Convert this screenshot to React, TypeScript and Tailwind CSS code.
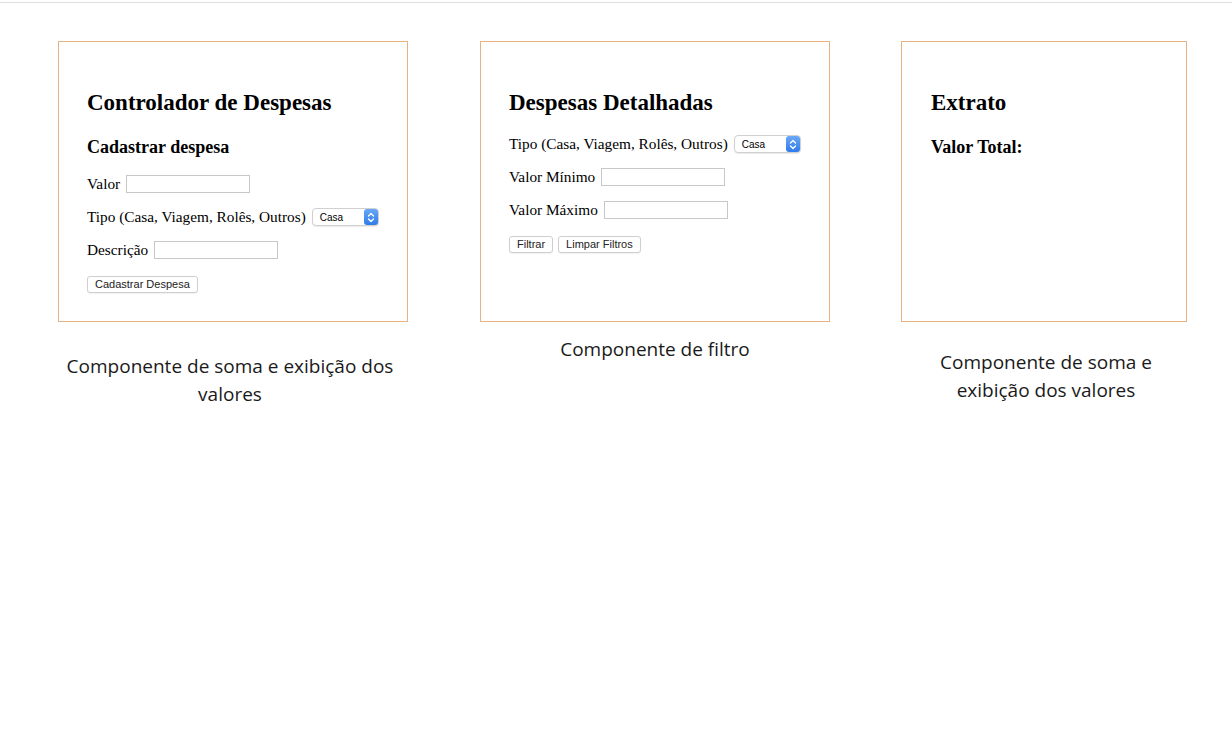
import React from 'react';

const serif = { fontFamily: '"Liberation Serif", "Times New Roman", serif' };

function TextInput({ w = 'w-[124px]' }: { w?: string }) {
  return <span className={`inline-block ${w} h-[18px] border border-[#c8c8c8] bg-white align-middle`} />;
}

function FakeSelect() {
  return (
    <span className="inline-flex items-center w-[67px] h-[18px] rounded-[4px] border border-[#d0d0d0] bg-white align-middle shadow-[0_1px_1px_rgba(0,0,0,0.08)]">
      <span className="flex-1 pl-[7px] text-[10px] text-black" style={{ fontFamily: '"Liberation Sans", Arial, sans-serif' }}>
        Casa
      </span>
      <span className="flex h-[16px] w-[14px] items-center justify-center rounded-[3px] bg-gradient-to-b from-[#6aa8f7] to-[#2f7be8]">
        <svg width="8" height="11" viewBox="0 0 8 11" fill="none" stroke="white" strokeWidth="1.3" strokeLinecap="round" strokeLinejoin="round">
          <path d="M1.5 4 L4 1.5 L6.5 4" />
          <path d="M1.5 7 L4 9.5 L6.5 7" />
        </svg>
      </span>
    </span>
  );
}

function Btn({ children }: { children: React.ReactNode }) {
  return (
    <span
      className="inline-flex items-center h-[17px] px-[7px] rounded-[3px] border border-[#cfcfcf] bg-white text-[11px] text-[#222] shadow-[0_1px_1px_rgba(0,0,0,0.06)]"
      style={{ fontFamily: '"Liberation Sans", Arial, sans-serif' }}
    >
      {children}
    </span>
  );
}

function Row({ children }: { children: React.ReactNode }) {
  return <div className="flex items-center gap-[6px] h-[18px] text-[15.3px] text-black">{children}</div>;
}

function Caption({ children, mt, w, shift = '' }: { children: React.ReactNode; mt: string; w: string; shift?: string }) {
  return (
    <p
      className={`${mt} ${w} ${shift} mx-auto text-center text-[19px] leading-[28px] text-[#1a1a1a]`}
      style={{ fontFamily: '"Open Sans", "Noto Sans", sans-serif' }}
    >
      {children}
    </p>
  );
}

export default function App() {
  return (
    <div className="w-[1232px] h-[752px] bg-white">
      <div className="h-[3px] border-b border-[#dedede]" />
      <div className="flex pl-[58px] pt-[38px]" style={serif}>
        {/* Cadastro */}
        <div className="w-[350px]">
          <div className="h-[281px] border border-[#e8b283] pl-[28px] pt-[48px]">
            <h1 className="text-[23px] font-bold leading-[26px]">Controlador de Despesas</h1>
            <h2 className="mt-[21px] text-[18px] font-bold leading-[20px]">Cadastrar despesa</h2>
            <div className="mt-[18px] flex flex-col gap-[15px]">
              <Row>
                <span>Valor</span>
                <TextInput />
              </Row>
              <Row>
                <span>Tipo (Casa, Viagem, Rolês, Outros)</span>
                <FakeSelect />
              </Row>
              <Row>
                <span>Descrição</span>
                <TextInput />
              </Row>
            </div>
            <div className="mt-[12px]">
              <Btn>Cadastrar Despesa</Btn>
            </div>
          </div>
          <Caption mt="mt-[30px]" w="w-[340px]" shift="-translate-x-[3px]">Componente de soma e exibição dos valores</Caption>
        </div>

        {/* Filtro */}
        <div className="w-[350px] ml-[72px]">
          <div className="h-[281px] border border-[#e8b283] pl-[28px] pt-[48px]">
            <h1 className="text-[23px] font-bold leading-[26px]">Despesas Detalhadas</h1>
            <div className="mt-[19px] flex flex-col gap-[15px]">
              <Row>
                <span>Tipo (Casa, Viagem, Rolês, Outros)</span>
                <FakeSelect />
              </Row>
              <Row>
                <span>Valor Mínimo</span>
                <TextInput />
              </Row>
              <Row>
                <span>Valor Máximo</span>
                <TextInput />
              </Row>
            </div>
            <div className="mt-[17px] flex gap-[5px]">
              <Btn>Filtrar</Btn>
              <Btn>Limpar Filtros</Btn>
            </div>
          </div>
          <Caption mt="mt-[13px]" w="w-[340px]">Componente de filtro</Caption>
        </div>

        {/* Extrato */}
        <div className="w-[286px] ml-[71px]">
          <div className="h-[281px] border border-[#e8b283] pl-[29px] pt-[48px]">
            <h1 className="text-[23px] font-bold leading-[26px]">Extrato</h1>
            <h2 className="mt-[21px] text-[18px] font-bold leading-[20px]">Valor Total:</h2>
          </div>
          <Caption mt="mt-[26px]" w="w-[230px]" shift="translate-x-[2px]">Componente de soma e exibição dos valores</Caption>
        </div>
      </div>
    </div>
  );
}
